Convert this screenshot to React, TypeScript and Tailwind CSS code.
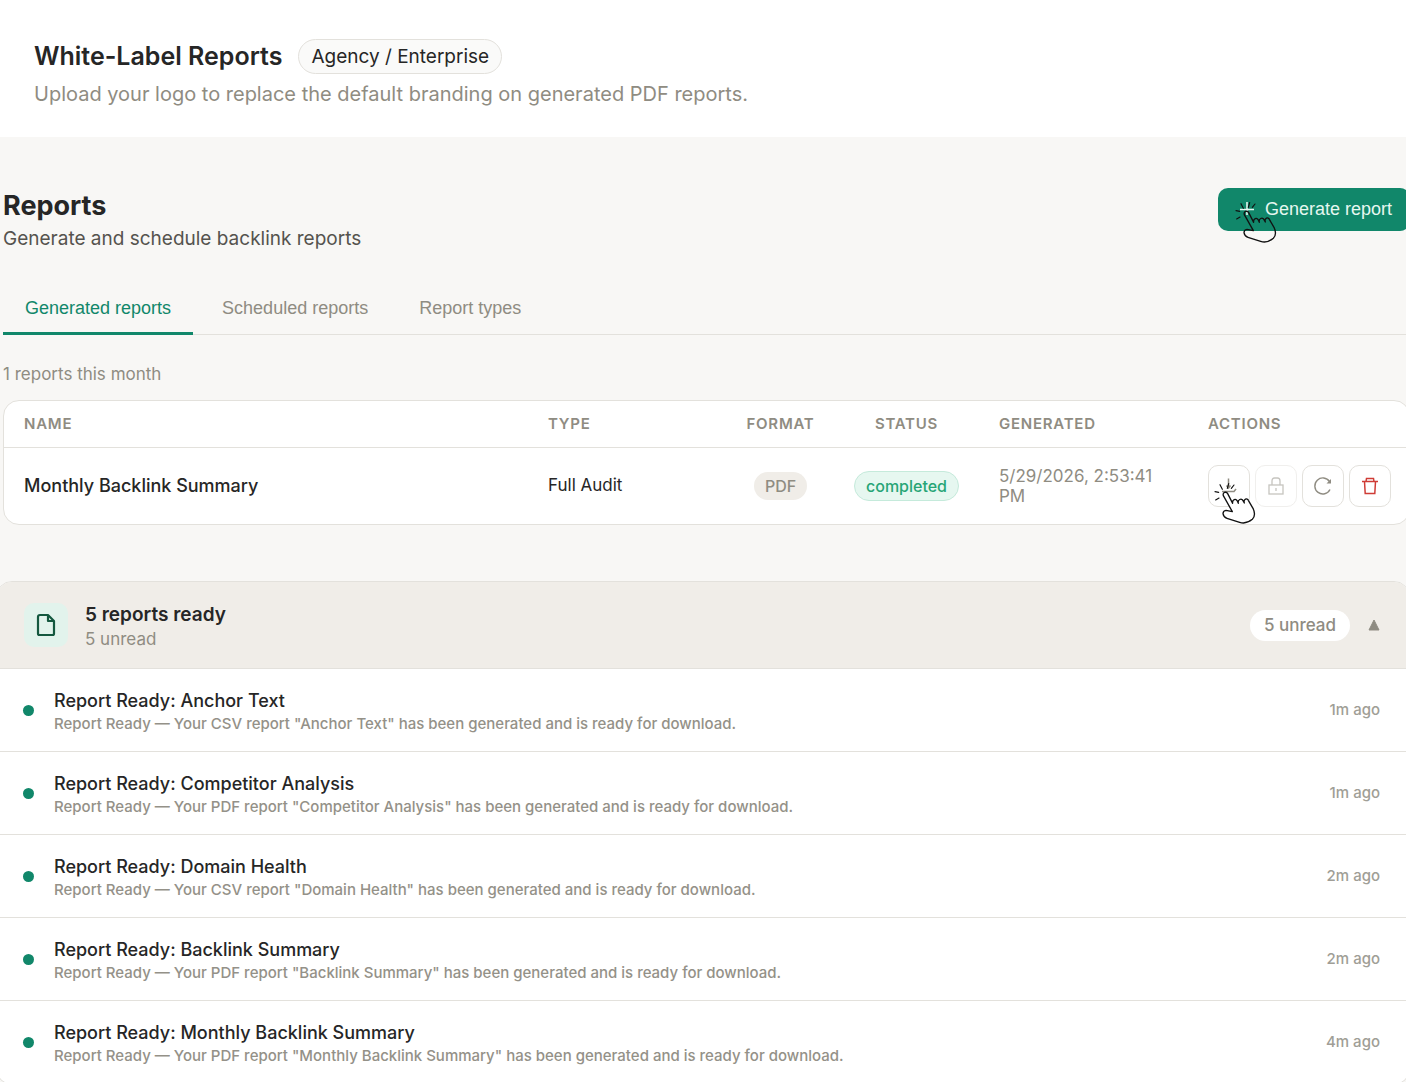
import { useState } from "react";
import clsx from "clsx";

const tabs = ["Generated reports", "Scheduled reports", "Report types"];

const notifications = [
    { name: "Anchor Text", format: "CSV", time: "1m ago" },
    { name: "Competitor Analysis", format: "PDF", time: "1m ago" },
    { name: "Domain Health", format: "CSV", time: "2m ago" },
    { name: "Backlink Summary", format: "PDF", time: "2m ago" },
    { name: "Monthly Backlink Summary", format: "PDF", time: "4m ago" },
];

const actionClass = "flex size-[42px] shrink-0 items-center justify-center rounded-[10px] border border-[#e3e1dc] bg-white";

// hand pointer with click sparks, the hot spot is the finger tip
function ClickPointer({ className, fill = "none" }: { className: string; fill?: string }) {
    return (
        <svg className={clsx("pointer-events-none absolute", className)} width="43" height="43" viewBox="0 0 129 129" fill="none" stroke="#111" strokeWidth="4" strokeLinecap="round" strokeLinejoin="round">
            <path d="M47 8L43 22M21 11L28 25M6 32L17 34M8 57L18 51M63 12L55 22" strokeWidth="3.500" />
            <path d="M58 92L31 44C28 34 40 30 44 38L59 67C57 56 69 51 73 60L76 67C73 56 86 50 90 59L94 66C90 54 103 50 106 58L120 82C127 97 126 107 118 115C107 124 95 129 80 124L42 112C36 110 31 105 30 98C30 92 33 89 39 88Z" fill={fill} />
        </svg>
    );
}

function DocIcon() {
    return (
        <svg width="20" height="24" viewBox="0 0 20 24" fill="none" stroke="#14583f" strokeWidth="2.200" strokeLinejoin="round">
            <path d="M4 2h8l6 6v12.500a1.500 1.500 0 0 1-1.500 1.500H3.500A1.500 1.500 0 0 1 2 20.500V4a2 2 0 0 1 2-2z" />
            <path d="M12 2.500V8h5.500" />
        </svg>
    );
}

function DownloadIcon() {
    return (
        <svg width="18" height="20" viewBox="0 0 18 20" fill="none" stroke="currentColor" strokeWidth="1.500">
            <path d="M8.500 2.500v9M6.500 9.500l2 2.500 2-2.500M2 15.500h12l2-2.500" />
        </svg>
    );
}

function LockIcon() {
    return (
        <svg width="16" height="18" viewBox="0 0 16 18" fill="none" stroke="currentColor" strokeWidth="1.300">
            <rect x="1" y="8" width="14" height="9" />
            <path d="M4 8V4c0-2 1-3 2.500-3h3C11 1 12 2 12 4v4M8 11v3" />
        </svg>
    );
}

function RetryIcon() {
    return (
        <svg width="20" height="20" viewBox="0 0 20 20" fill="none" stroke="currentColor" strokeWidth="1.400">
            <path d="M17 13.500A8 8 0 1 1 16.500 5.500" />
            <path d="M18 3v4.500h-4.500z" fill="currentColor" stroke="none" />
        </svg>
    );
}

function TrashIcon() {
    return (
        <svg width="18" height="18" viewBox="0 0 18 18" fill="none" stroke="currentColor" strokeWidth="1.500">
            <path d="M1 4.500h16M5 4.500L5.500 1.500h7l.5 3M3.500 4.500l.7 12h9.600l.7-12" />
        </svg>
    );
}

export default function App() {
    const [activeTab, setActiveTab] = useState(0);
    const [open, setOpen] = useState(true);

    return (
        <div className="overflow-hidden bg-[#f8f7f5] font-['Inter',sans-serif] text-[#262626]">
            <header className="bg-white px-[34px] pt-[39px] pb-7">
                <div className="flex items-center gap-4">
                    <h1 className="text-[25px] leading-[35px] font-semibold">White-Label Reports</h1>
                    <span className="rounded-full border border-[#e3e1dc] bg-[#fafaf9] px-3 text-[19px] leading-[33px]">Agency / Enterprise</span>
                </div>
                <p className="mt-[5px] text-[20px] leading-[30px] text-[#8f8c82]">Upload your logo to replace the default branding on generated PDF reports.</p>
            </header>

            <main className="pt-[51px]">
                <div className="-mr-1 pl-[3px]">
                    <div className="flex items-start justify-between">
                        <div>
                            <h2 className="text-[27px] leading-[36px] font-bold">Reports</h2>
                            <p className="text-[19px] leading-[30px] text-[#55534e]">Generate and schedule backlink reports</p>
                        </div>
                        <div className="relative">
                            <button type="button" className="flex h-[43px] items-center gap-2 rounded-[10px] bg-[#11876a] pr-[18px] pl-5 font-['Liberation_Sans',sans-serif] text-[18px] text-[#e6f7f0]">
                                <svg width="19" height="19" viewBox="0 0 19 19" stroke="currentColor" strokeWidth="1.600">
                                    <path d="M9 2v13M2 9.500h14" />
                                </svg>
                                Generate report
                            </button>
                            <ClickPointer className="top-3 left-4" />
                        </div>
                    </div>

                    <div className="mt-[27px] flex border-b border-[#e3e1dc]" role="tablist">
                        {tabs.map((tab, i) => (
                            <button
                                key={tab}
                                type="button"
                                role="tab"
                                aria-selected={activeTab === i}
                                onClick={() => setActiveTab(i)}
                                className={clsx(
                                    "-mb-px h-[54px] border-b-[3px] px-[22px] pt-1 font-['Liberation_Sans',sans-serif] text-[18px]",
                                    i > 0 && "ml-[7px]",
                                    activeTab === i ? "border-[#11876a] text-[#11876a]" : "border-transparent text-[#8f8c82]"
                                )}
                            >
                                {tab}
                            </button>
                        ))}
                    </div>

                    <p className="mt-[26px] text-[17px] leading-[26px] text-[#8f8c82]">1 reports this month</p>

                    <div className="mt-[13px] rounded-[16px] border border-[#e3e1dc] bg-white">
                        <table className="w-full table-fixed text-left">
                            <colgroup>
                                <col />
                                <col className="w-[199px]" />
                                <col className="w-[107px]" />
                                <col className="w-[145px]" />
                                <col className="w-[209px]" />
                                <col className="w-[221px]" />
                            </colgroup>
                            <thead>
                                <tr className="h-[46px] border-b border-[#e3e1dc] text-[15px] tracking-wider text-[#8f8c82] [&>th]:font-semibold">
                                    <th className="px-5">NAME</th>
                                    <th className="px-5">TYPE</th>
                                    <th className="text-center">FORMAT</th>
                                    <th className="text-center">STATUS</th>
                                    <th className="px-5">GENERATED</th>
                                    <th className="px-5">ACTIONS</th>
                                </tr>
                            </thead>
                            <tbody>
                                <tr className="h-[77px]">
                                    <td className="px-5 text-[18px] font-medium">Monthly Backlink Summary</td>
                                    <td className="px-5 text-[17px]">Full Audit</td>
                                    <td className="text-center">
                                        <span className="inline-block rounded-full bg-[#f0ede8] px-[11px] text-[16px] leading-[28px] font-medium text-[#8f8c82]">PDF</span>
                                    </td>
                                    <td className="text-center">
                                        <span className="inline-block rounded-full border border-[#c5eadb] bg-[#e6f7f0] px-[11px] text-[16px] leading-[28px] font-medium text-[#27a576]">completed</span>
                                    </td>
                                    <td className="px-5 text-[17px] leading-[20px] text-[#8f8c82]">5/29/2026, 2:53:41 PM</td>
                                    <td className="pl-5">
                                        <div className="flex gap-[5px]">
                                            <div className="relative">
                                                <button type="button" aria-label="Download" className={clsx(actionClass, "text-[#8f8c82]")}><DownloadIcon /></button>
                                                <ClickPointer className="top-4 left-[5px]" fill="#fff" />
                                            </div>
                                            <button type="button" aria-label="Lock" disabled className={clsx(actionClass, "text-[#8f8c82] opacity-50")}><LockIcon /></button>
                                            <button type="button" aria-label="Retry" className={clsx(actionClass, "text-[#8f8c82]")}><RetryIcon /></button>
                                            <button type="button" aria-label="Delete" className={clsx(actionClass, "text-[#cf3c36]")}><TrashIcon /></button>
                                        </div>
                                    </td>
                                </tr>
                            </tbody>
                        </table>
                    </div>
                </div>

                <section className="-mx-1 mt-14 overflow-hidden rounded-[16px] border border-[#e3e1dc] bg-white">
                    <div className="flex h-[87px] items-center border-b border-[#e3e1dc] bg-[#f0ede8] pr-[28px] pl-[27px]">
                        <div className="flex size-[44px] items-center justify-center rounded-[10px] bg-[#e2f3ec]">
                            <DocIcon />
                        </div>
                        <div className="ml-[17px] flex-1 pt-0.5">
                            <h3 className="text-[19px] leading-[26px] font-semibold">5 reports ready</h3>
                            <p className="text-[17px] leading-[22px] text-[#8f8c82]">5 unread</p>
                        </div>
                        <span className="rounded-full bg-white px-[14px] text-[17px] leading-[31px] font-medium text-[#8f8c82]">5 unread</span>
                        <button type="button" aria-label="Toggle list" aria-expanded={open} onClick={() => setOpen(!open)} className="ml-[17px]">
                            <svg className={clsx(!open && "rotate-180")} width="14" height="12" viewBox="0 0 14 12" fill="#8f8c82">
                                <path d="M7 1L12 11H2z" stroke="#8f8c82" strokeLinejoin="round" />
                            </svg>
                        </button>
                    </div>
                    {open && (
                        <ul>
                            {notifications.map((item) => (
                                <li key={item.name} className="flex h-[83px] items-center border-b border-[#e3e1dc] pr-[29px] pl-[26px] last:border-b-0">
                                    <span className="size-[11px] rounded-full bg-[#11876a]" />
                                    <div className="ml-5 flex-1 pt-0.5">
                                        <p className="text-[18px] leading-[24px] font-medium">Report Ready: {item.name}</p>
                                        <p className="text-[15px] leading-[21px] font-medium text-[#949188]">
                                            Report Ready — Your {item.format} report "{item.name}" has been generated and is ready for download.
                                        </p>
                                    </div>
                                    <time className="text-[15px] font-medium text-[#a09e96]">{item.time}</time>
                                </li>
                            ))}
                        </ul>
                    )}
                </section>
            </main>
        </div>
    );
}
